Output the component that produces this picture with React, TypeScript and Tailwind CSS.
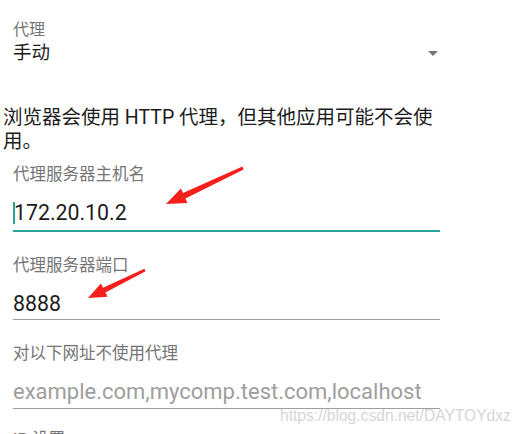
const Arrow = ({ points }: { points: string }) => (
  <polygon points={points} fill="#f5201c" />
);

export default function App() {
  return (
    <div
      className="relative w-[527px] h-[434px] overflow-hidden bg-white text-[#1c1c1c]"
      style={{ fontFamily: "Roboto, 'Noto Sans CJK SC', sans-serif" }}
    >
      {/* proxy select */}
      <div className="pt-[22px] pl-[13px] w-[440px]">
        <div className="text-[16px] leading-[16px] text-[#757575]">代理</div>
        <div className="mt-[6px] flex items-center justify-between">
          <span className="text-[18.5px] leading-[18.5px]">手动</span>
          <span className="mr-[2px] w-0 h-0 border-l-[5px] border-r-[5px] border-t-[5px] border-l-transparent border-r-transparent border-t-[#757575]" />
        </div>
      </div>

      <p className="mt-[43px] pl-[3px] w-[443px] text-[19.5px] leading-[24px]">
        浏览器会使用 HTTP 代理，但其他应用可能不会使用。
      </p>

      <div className="pl-[13px] w-[440px]">
        <div className="mt-[13px] text-[16.5px] leading-[16.5px] text-[#757575]">代理服务器主机名</div>
        <div className="mt-[18.5px] pb-[6px] border-b-2 border-[#26a69a] flex items-center">
          <span className="w-[2px] h-[22px] -mr-[1px] bg-[#26a69a]" />
          <span className="text-[21.3px] leading-[21px]">172.20.10.2</span>
        </div>

        <div className="mt-[26px] text-[16.5px] leading-[16.5px] text-[#757575]">代理服务器端口</div>
        <div className="mt-[18.5px] pb-[5px] border-b border-[#9e9e9e] text-[21.3px] leading-[21px]">8888</div>

        <div className="mt-[26px] text-[16.5px] leading-[16.5px] text-[#757575]">对以下网址不使用代理</div>
        <div className="mt-[18.5px] pb-[6px] border-b border-[#9e9e9e] text-[22px] leading-[21px] text-[#9e9e9e]">
          example.com,mycomp.test.com,localhost
        </div>

        <div className="mt-[23px] text-[16.5px] leading-[16.5px] text-[#757575]">IP 设置</div>
      </div>

      {/* watermark */}
      <div
        className="absolute left-[280px] top-[407px] text-[15.6px] leading-[18px] text-[#d6d6d6]"
        style={{ fontFamily: "'Liberation Sans', sans-serif" }}
      >
        https://blog.csdn.net/DAYTOYdxz
      </div>

      {/* annotation arrows */}
      <svg className="absolute left-0 top-0" width="527" height="434">
        <Arrow points="166,204 180.9,188.4 183,193 242.4,166.6 243.6,169.4 185.4,198.4 187.5,203" />
        <Arrow points="88,298 100.9,283.4 103,287.7 144.4,268.8 145.6,271.2 105.4,292.5 107.5,296.8" />
      </svg>
    </div>
  );
}
